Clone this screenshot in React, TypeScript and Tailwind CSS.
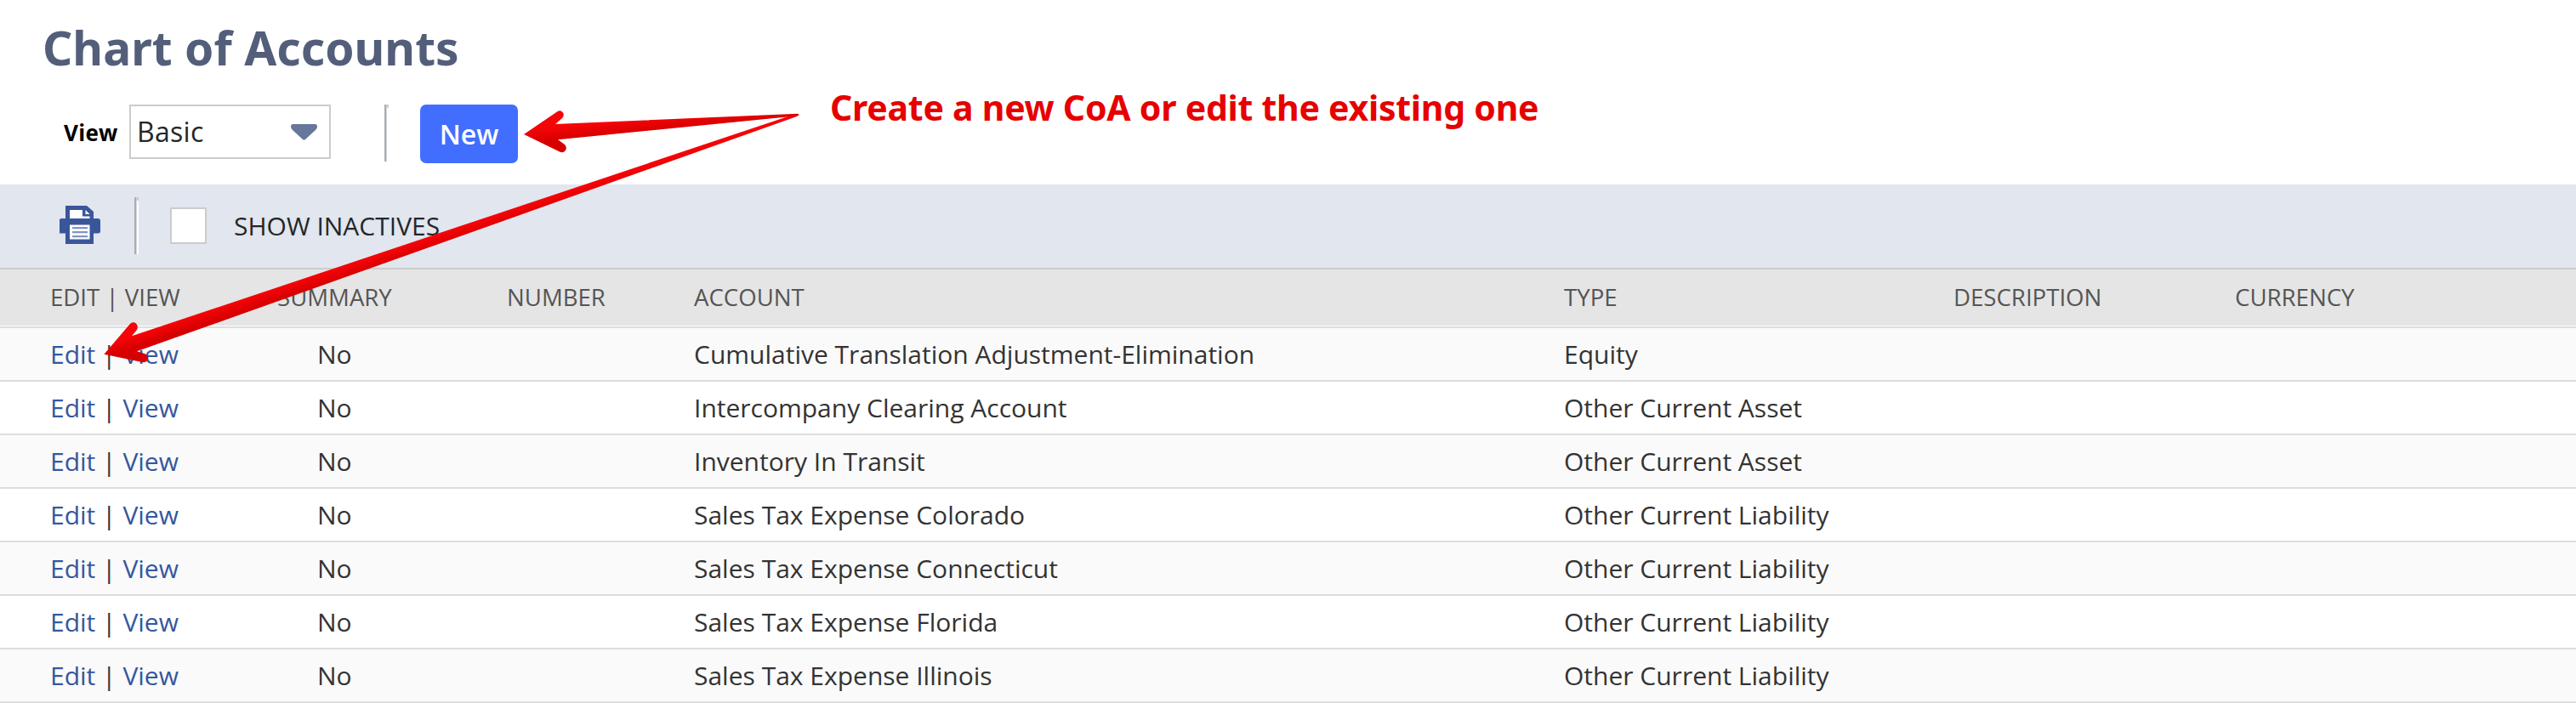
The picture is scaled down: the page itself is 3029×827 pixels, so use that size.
const accounts = [
  { name: 'Cumulative Translation Adjustment-Elimination', type: 'Equity' },
  { name: 'Intercompany Clearing Account', type: 'Other Current Asset' },
  { name: 'Inventory In Transit', type: 'Other Current Asset' },
  { name: 'Sales Tax Expense Colorado', type: 'Other Current Liability' },
  { name: 'Sales Tax Expense Connecticut', type: 'Other Current Liability' },
  { name: 'Sales Tax Expense Florida', type: 'Other Current Liability' },
  { name: 'Sales Tax Expense Illinois', type: 'Other Current Liability' },
]

const cols = 'grid grid-cols-[266px_268px_281px_1023px_458px_331px_1fr] items-center'

export default function App() {
  return (
    <div className="relative h-[827px] w-[3029px] overflow-hidden bg-white font-['Open_Sans',sans-serif] text-[#333]">
      <header className="flex h-[217px] flex-col">
        <h1 className="pt-[18px] pl-[50px] font-['Noto_Sans',sans-serif] text-[55px] leading-[75px] font-bold tracking-[0.050px] text-[#535f7a]">Chart of Accounts</h1>
        <div className="mt-[30px] flex items-start pl-[75px]">
          <span className="w-[77px] pt-[15px] text-[26px] leading-[36px] font-bold tracking-[0.300px] text-black">View</span>
          <div className="flex h-[64px] w-[237px] items-center justify-between border-2 border-[#ccc] pr-[14px] pl-[7px] text-[32px] leading-[44px] text-[#262626]">
            <span className="tracking-[0.300px]">Basic</span>
            <svg className="h-[19px] w-[31px]" viewBox="0 0 31 19" fill="#667799">
              <path d="M3 0h25q3 0 3 3q0 2-2 4L17 18q-1.500 1.500-3 0L2 7Q0 5 0 3Q0 0 3 0z" />
            </svg>
          </div>
          <Divider className="ml-[63px]" />
          <button className="ml-[37px] h-[69px] w-[115px] rounded-[7px] bg-[#426eff] text-[32px] leading-[69px] font-semibold text-white">New</button>
          <p className="-mt-[25px] ml-[367px] font-['Noto_Sans',sans-serif] text-[41px] leading-[56px] font-bold tracking-[-0.250px] whitespace-nowrap text-[#e60000]">
            Create a new CoA or edit the existing one
          </p>
        </div>
      </header>

      <div className="flex h-[98px] items-start bg-[#e1e6ef] pl-[70px]">
        <PrintIcon />
        <Divider className="mt-[15px] ml-[40px]" />
        <span className="mt-[27px] ml-[37px] h-[43px] w-[43px] border-2 border-[#ccc] bg-white" />
        <span className="mt-[28px] ml-[32px] text-[30px] leading-[42px] text-[#262626]">SHOW INACTIVES</span>
      </div>

      <div className={`${cols} h-[68px] border-t-2 border-[#ccc] bg-[#e5e5e5] pb-[2px] pl-px text-[27.600px] leading-[38px] text-[#555]`}>
        <span className="pl-[58px]">EDIT | VIEW</span>
        <span className="pl-[59px]">SUMMARY</span>
        <span className="pl-[61px]">NUMBER</span>
        <span>ACCOUNT</span>
        <span>TYPE</span>
        <span>DESCRIPTION</span>
        <span>CURRENCY</span>
      </div>

      <div className="border-t border-white">
        <div className="border-t-2 border-[#ddd]">
          {accounts.map(a => (
            <div key={a.name} className={`${cols} h-[63px] border-b-2 border-[#ddd] pl-px text-[30px] leading-[40px] odd:bg-[#fafafa]`}>
              <span className="pl-[58px]">
                <a className="text-[#36579d]">Edit</a> | <a className="text-[#36579d]">View</a>
              </span>
              <span className="pl-[106px]">No</span>
              <span />
              <span>{a.name}</span>
              <span>{a.type}</span>
            </div>
          ))}
        </div>
      </div>

      <Arrows />
    </div>
  )
}

function Divider({ className }: { className: string }) {
  return (
    <span className={`${className} flex h-[67px] w-[5px] items-start`}>
      <span className="h-full w-[2px] bg-[#a9adb0]" />
      <span className="h-full w-[3px] border-t-4 border-l border-t-[#ccc] border-l-[#d5d8da] bg-white" />
    </span>
  )
}

function PrintIcon() {
  return (
    <svg className="mt-[25px] h-[45px] w-[48px]" viewBox="0 0 48 45">
      <path fill="#3a569b" d="M7 0h25l8 7v8h5q3 0 3 3v12q0 2.500-3 2.500h-5V45H7V32.500H0V16l2-1h5z" />
      <path fill="#fff" d="M12 5h15v7.500h8.500V15H12zM30.500 5l5 5h-5zM12 22.500h23.500v17H12z" />
      <path fill="#8195c4" d="M15 25h18v2.200H15zM15 30h18v2.200H15zM15 35h18v2.200H15z" />
    </svg>
  )
}

function Arrows() {
  return (
    <svg className="pointer-events-none absolute top-0 left-0 h-[450px] w-[960px]" viewBox="0 0 960 450">
      <defs>
        <linearGradient id="short" gradientUnits="userSpaceOnUse" x1="680" y1="143" x2="682" y2="164">
          <stop offset="0.200" stopColor="#f50408" />
          <stop offset="0.900" stopColor="#d60000" />
        </linearGradient>
        <linearGradient id="long" gradientUnits="userSpaceOnUse" x1="395" y1="312" x2="401" y2="330">
          <stop offset="0.200" stopColor="#f50408" />
          <stop offset="0.900" stopColor="#d60000" />
        </linearGradient>
      </defs>
      <path fill="url(#long)" d="M122.400 416.700L152.500 381.500Q156 377.500 160 380.500Q163 384 161 388L155 395.300L934 134.500L939 134L937 137L161 413.300L170 416Q175 418 174 422.500Q172 427 167 426z" />
      <path fill="url(#short)" d="M616 158L655 131.500Q659 128.500 662 132.500Q664 136 661 139L653 146L938 133.700Q941 135 938 136.300L656 164.300L664 170Q667 173 665 177Q662 180.500 658 178.500z" />
    </svg>
  )
}
